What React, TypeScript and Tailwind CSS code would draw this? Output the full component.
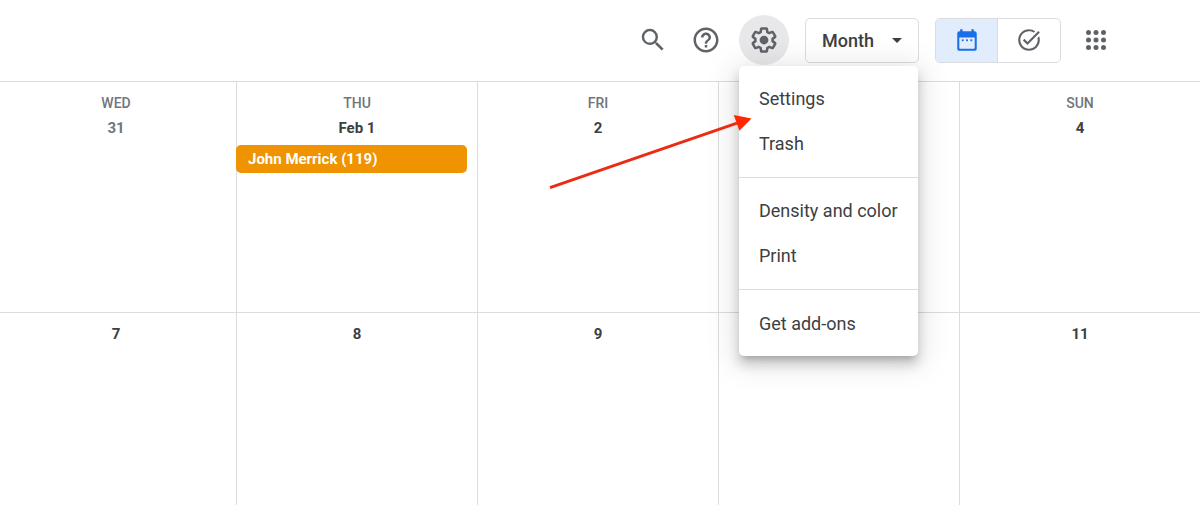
import { MdHelpOutline, MdSearch, MdTaskAlt } from "react-icons/md";

type Day = { key: string; date?: string; muted?: boolean; event?: string };

const weekdays = ["WED", "THU", "FRI", "", "SUN"];

const firstWeek: Day[] = [
  { key: "jan-31", date: "31", muted: true },
  { key: "feb-1", date: "Feb 1", event: "John Merrick (119)" },
  { key: "feb-2", date: "2" },
  { key: "feb-3" },
  { key: "feb-4", date: "4" },
];

const secondWeek: Day[] = [
  { key: "feb-7", date: "7" },
  { key: "feb-8", date: "8" },
  { key: "feb-9", date: "9" },
  { key: "feb-10" },
  { key: "feb-11", date: "11" },
];

const menuSections = [["Settings", "Trash"], ["Density and color", "Print"], ["Get add-ons"]];

function GearIcon() {
  return (
    <svg viewBox="0 0 24 24" fill="currentColor" className="size-[30px]" aria-hidden="true">
      <path d="M13.85 22.25h-3.7c-.74 0-1.36-.54-1.45-1.27l-.27-1.89c-.27-.14-.53-.29-.79-.46l-1.8.72c-.7.26-1.47-.03-1.81-.65L2.2 15.53c-.35-.66-.2-1.44.36-1.88l1.53-1.19c-.01-.15-.02-.3-.02-.46 0-.15.01-.31.02-.46l-1.52-1.19c-.59-.45-.74-1.26-.37-1.88l1.85-3.19c.34-.62 1.11-.9 1.79-.63l1.81.73c.26-.17.52-.32.78-.46l.27-1.91c.09-.7.71-1.25 1.44-1.25h3.7c.74 0 1.36.54 1.45 1.27l.27 1.89c.27.14.53.29.79.46l1.8-.72c.71-.26 1.48.03 1.82.65l1.84 3.18c.36.66.2 1.44-.36 1.88l-1.52 1.19c.01.15.02.3.02.46s-.01.31-.02.46l1.52 1.19c.56.45.72 1.23.37 1.86l-1.86 3.22c-.34.62-1.11.9-1.8.63l-1.8-.72c-.26.17-.52.32-.78.46l-.27 1.91c-.1.68-.72 1.22-1.46 1.22zm-3.23-2h2.76l.37-2.55.53-.22c.44-.18.88-.44 1.34-.78l.45-.34 2.38.96 1.38-2.4-2.03-1.58.07-.56c.03-.26.06-.51.06-.78s-.03-.53-.06-.78l-.07-.56 2.03-1.58-1.39-2.4-2.39.96-.45-.35c-.42-.32-.87-.58-1.33-.77l-.52-.22-.37-2.55h-2.76l-.37 2.55-.53.21c-.44.19-.88.44-1.34.79l-.45.33-2.38-.95-1.39 2.39 2.03 1.58-.07.56a7 7 0 0 0-.06.79c0 .26.02.53.06.78l.07.56-2.03 1.58 1.38 2.4 2.39-.96.45.35c.43.33.86.58 1.33.77l.53.22.38 2.55z" />
      <circle cx="12" cy="12" r="3.5" />
    </svg>
  );
}

function CalendarIcon() {
  return (
    <svg viewBox="0 0 24 24" fill="currentColor" className="size-[26px]" aria-hidden="true">
      <path
        fillRule="evenodd"
        d="M5.7 2h2.2v2h8.2V2h2.2v2H19a2 2 0 0 1 2 2v14a2 2 0 0 1-2 2H5a2 2 0 0 1-2-2V6a2 2 0 0 1 2-2h.7V2zM4.9 9.6v9.8c0 .4.3.7.7.7h12.8c.4 0 .7-.3.7-.7V9.6H4.9z"
      />
      <rect x="7.2" y="11.4" width="1.7" height="1.7" />
      <rect x="11.15" y="11.4" width="1.7" height="1.7" />
      <rect x="15.1" y="11.4" width="1.7" height="1.7" />
    </svg>
  );
}

function AppsIcon() {
  return (
    <svg viewBox="0 0 24 24" fill="currentColor" className="size-[30px]" aria-hidden="true">
      {[6, 12, 18].map((y) => [6, 12, 18].map((x) => <circle key={`${x}-${y}`} cx={x} cy={y} r="2" />))}
    </svg>
  );
}

function SettingsMenu() {
  return (
    <div
      role="menu"
      aria-label="Settings menu"
      className="absolute top-full left-0 z-10 mt-px w-[179px] divide-y divide-[#dadce0] rounded-[5px] bg-white shadow-[0_8px_12px_1px_rgba(0,0,0,0.16),0_4px_30px_6px_rgba(0,0,0,0.1),0_6px_6px_-4px_rgba(0,0,0,0.2)]"
    >
      {menuSections.map((items) => (
        <div key={items[0]} role="group" className="pt-[10px] pb-[11px] last:pt-[11px] last:pb-[10px]">
          {items.map((item) => (
            <button
              key={item}
              type="button"
              role="menuitem"
              className="block h-[45px] w-full px-5 text-left text-[18px] leading-6 whitespace-nowrap"
            >
              {item}
            </button>
          ))}
        </div>
      ))}
    </div>
  );
}

function PointerArrow() {
  return (
    <svg
      viewBox="0 0 210 84"
      className="pointer-events-none absolute top-[95px] left-[-194px] z-20 h-[84px] w-[210px]"
      aria-hidden="true"
    >
      <path d="M5 77.6 192 13.2" stroke="#ea2c14" strokeWidth="3" fill="none" />
      <path d="M206.5 8.6 188.8 5 194.4 20.8z" fill="#ff2600" />
    </svg>
  );
}

function Toolbar() {
  return (
    <header className="flex h-[81px] items-center justify-end gap-4 pr-[79px] pb-px text-[#5f6368]">
      <div className="flex items-center gap-2">
        <div className="flex items-center gap-[3px]">
          <button type="button" aria-label="Search" className="grid size-[50px] place-items-center rounded-full">
            <MdSearch className="size-[30px]" />
          </button>
          <button type="button" aria-label="Support" className="grid size-[50px] place-items-center rounded-full">
            <MdHelpOutline className="size-[30px]" />
          </button>
        </div>
        <div className="relative text-[#3c4043]">
          <button
            type="button"
            aria-label="Settings menu"
            aria-haspopup="menu"
            aria-expanded="true"
            className="grid size-[50px] place-items-center rounded-full bg-[#e8e8ea] text-[#5f6368]"
          >
            <GearIcon />
          </button>
          <SettingsMenu />
          <PointerArrow />
        </div>
      </div>

      <div className="relative text-[#3c4043]">
        <select
          aria-label="View"
          defaultValue="Month"
          className="h-[45px] w-[114px] appearance-none rounded-[5px] border border-[#dadce0] bg-transparent pl-4 text-[18px] font-medium"
        >
          <option>Month</option>
        </select>
        <svg
          viewBox="0 0 10 5"
          fill="currentColor"
          className="pointer-events-none absolute top-5 right-[17px] h-[5px] w-[10px]"
          aria-hidden="true"
        >
          <path d="M0 0h10L5 5z" />
        </svg>
      </div>

      <div className="flex items-center gap-[10px]">
        <div className="flex h-[45px] w-[126px] divide-x divide-[#dadce0] overflow-hidden rounded-[5px] border border-[#dadce0]">
          <button
            type="button"
            aria-label="Calendar"
            aria-pressed="true"
            className="grid w-[62px] place-items-center bg-[#e1edfd] text-[#1a6fe8]"
          >
            <CalendarIcon />
          </button>
          <button type="button" aria-label="Tasks" aria-pressed="false" className="grid flex-1 place-items-center">
            <MdTaskAlt className="size-[26px]" />
          </button>
        </div>
        <button type="button" aria-label="Google apps" className="grid size-[50px] place-items-center rounded-full">
          <AppsIcon />
        </button>
      </div>
    </header>
  );
}

function DayContent({ day }: { day: Day }) {
  return (
    <>
      <div className={day.muted ? "text-center text-[#70757a]" : "text-center"}>{day.date}</div>
      {day.event && (
        <button
          type="button"
          className="mt-[5px] -ml-px flex h-7 w-[calc(100%-9px)] items-center rounded-[5px] bg-[#ef9300] pl-3 text-white"
        >
          {day.event}
        </button>
      )}
    </>
  );
}

function MonthGrid() {
  return (
    <main className="flex-1 overflow-hidden">
      <table className="-ml-[5px] w-[calc(100%+5px)] table-fixed border-separate border-spacing-0 text-[15px] leading-6 font-bold">
        <thead>
          <tr>
            {weekdays.map((name, column) => (
              <th
                key={column}
                scope="col"
                className="border-t border-l border-[#dadce0] p-0 pt-[11px] text-[14px] leading-5 font-medium text-[#70757a]"
              >
                {name}
              </th>
            ))}
          </tr>
        </thead>
        <tbody>
          <tr className="h-[199px]">
            {firstWeek.map((day) => (
              <td key={day.key} className="border-l border-[#dadce0] p-0 pt-[3px] align-top">
                <DayContent day={day} />
              </td>
            ))}
          </tr>
          <tr className="h-[231px]">
            {secondWeek.map((day) => (
              <td key={day.key} className="border-t border-l border-[#dadce0] p-0 pt-[9px] align-top">
                <DayContent day={day} />
              </td>
            ))}
          </tr>
        </tbody>
      </table>
    </main>
  );
}

export default function App() {
  return (
    <div className="flex h-screen flex-col overflow-hidden bg-white font-[Roboto,sans-serif] text-[#3c4043]">
      <Toolbar />
      <MonthGrid />
    </div>
  );
}
